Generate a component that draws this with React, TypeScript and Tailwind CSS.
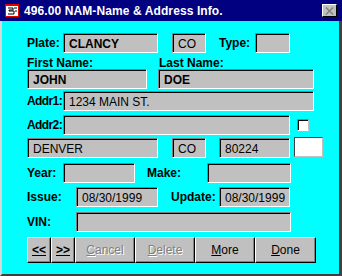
import React from "react";

const font = { fontFamily: '"Liberation Sans", Arial, sans-serif' };

const dither = "bg-[#c0c0c0]";

function Field({ w, children, bold }: { w: string; children?: React.ReactNode; bold?: boolean }) {
  return (
    <div
      className={`${w} h-[20px] shrink-0 ${dither} border border-t-[#808080] border-l-[#808080] border-b-white border-r-white shadow-[inset_1px_1px_0_#000] flex items-center pl-[5px] pt-[2px] text-[12px] leading-none text-black ${bold ? "font-bold" : ""}`}
    >
      {children}
    </div>
  );
}

function Label({ children, w }: { children: React.ReactNode; w?: string }) {
  return (
    <div className={`${w ?? ""} shrink-0 whitespace-nowrap text-[12px] font-bold leading-none text-black`}>
      {children}
    </div>
  );
}

function Btn({ w, children, disabled }: { w: string; children: React.ReactNode; disabled?: boolean }) {
  return (
    <div
      className={`${w} h-[26px] shrink-0 ${dither} border border-t-white border-l-white border-b-black border-r-black shadow-[inset_-1px_-1px_0_#808080] flex items-center justify-center text-[12px] leading-none ${disabled ? "text-[#808080] [text-shadow:1px_1px_0_#fff]" : "text-black"}`}
    >
      {children}
    </div>
  );
}

export default function App() {
  return (
    <div className="w-[342px] h-[276px] bg-[#c0c0c0] flex flex-col overflow-hidden" style={font}>
      {/* title bar */}
      <div className="h-[21px] bg-[#000080] flex items-center pl-[5px] pr-[5px] shrink-0">
        <svg width="14" height="13" viewBox="0 0 14 13" className="shrink-0">
          <rect x="0.5" y="0.5" width="13" height="12" fill="#fff" stroke="#e00000" />
          <rect x="0" y="0" width="14" height="2" fill="#e00000" />
          <path d="M3 4h5v2H4v1h5v3H3" fill="none" stroke="#000" strokeWidth="1" />
          <path d="M9 4h3M10 7h2" stroke="#000" strokeWidth="1" />
        </svg>
        <div className="ml-[5px] text-white font-bold text-[12px] leading-none pt-[1px] whitespace-nowrap tracking-[0.1px]">
          496.00 NAM-Name &amp; Address Info.
        </div>
        <div className={`ml-auto w-[15px] h-[13px] ${dither} border border-t-white border-l-white border-b-black border-r-black flex items-center justify-center`}>
          <svg width="9" height="8" viewBox="0 0 9 8">
            <path d="M1 0.5l7 7M8 0.5l-7 7" stroke="#808080" strokeWidth="1.4" />
          </svg>
        </div>
      </div>

      {/* body */}
      <div className="flex-1 bg-[#00ffff] border-l-2 border-l-[#d8d8d8] border-r-[3px] border-r-[#404040] border-b-2 border-b-[#404040] flex flex-col pl-[25px] pt-[12px]">
        {/* Plate row */}
        <div className="flex items-center h-[20px]">
          <Label w="w-[36px]">Plate:</Label>
          <Field w="w-[95px]" bold>CLANCY</Field>
          <div className="w-[14px]" />
          <Field w="w-[34px]">CO</Field>
          <div className="w-[13px]" />
          <Label w="w-[36px]">Type:</Label>
          <Field w="w-[35px]" />
        </div>
        {/* names labels */}
        <div className="flex items-end h-[16px]">
          <Label w="w-[132px]">First Name:</Label>
          <Label>Last Name:</Label>
        </div>
        <div className="flex items-center h-[20px]">
          <Field w="w-[120px]" bold>JOHN</Field>
          <div className="w-[11px]" />
          <Field w="w-[156px]" bold>DOE</Field>
        </div>
        {/* Addr1 */}
        <div className="flex items-center h-[20px] mt-[2px]">
          <Label w="w-[36px] tracking-[-0.6px]">Addr1:</Label>
          <Field w="w-[251px]">1234 MAIN ST.</Field>
        </div>
        {/* Addr2 */}
        <div className="flex items-center h-[20px] mt-[4px]">
          <Label w="w-[36px] tracking-[-0.6px]">Addr2:</Label>
          <Field w="w-[227px]" />
          <div className="ml-[7px] w-[12px] h-[12px] bg-white border border-t-[#808080] border-l-[#808080] border-b-white border-r-[#c0c0c0] shadow-[inset_1px_1px_0_#000]" />
        </div>
        {/* City row */}
        <div className="flex items-center h-[20px] mt-[3px]">
          <Field w="w-[131px]">DENVER</Field>
          <div className="w-[14px]" />
          <Field w="w-[34px]">CO</Field>
          <div className="w-[13px]" />
          <Field w="w-[71px]">80224</Field>
          <div className="ml-[4px] w-[29px] h-[20px] -mt-[2px] bg-white border border-t-[#404040] border-l-[#404040] border-b-[#c0c0c0] border-r-[#c0c0c0]" />
        </div>
        {/* Year/Make */}
        <div className="flex items-center h-[20px] mt-[5px]">
          <Label w="w-[36px]">Year:</Label>
          <Field w="w-[72px]" />
          <div className="w-[12px]" />
          <Label w="w-[60px]">Make:</Label>
          <Field w="w-[84px]" />
        </div>
        {/* Issue/Update */}
        <div className="flex items-center h-[20px] mt-[4px]">
          <Label w="w-[49px]">Issue:</Label>
          <Field w="w-[82px]">08/30/1999</Field>
          <div className="w-[13px]" />
          <Label w="w-[48px]">Update:</Label>
          <Field w="w-[71px]">08/30/1999</Field>
        </div>
        {/* VIN */}
        <div className="flex items-center h-[20px] mt-[5px]">
          <Label w="w-[49px]">VIN:</Label>
          <Field w="w-[215px]" />
        </div>
        {/* buttons */}
        <div className="flex h-[26px] mt-[5px]">
          <Btn w="w-[24px]"><span className="underline font-bold">&lt;&lt;</span></Btn>
          <Btn w="w-[24px]"><span className="underline font-bold">&gt;&gt;</span></Btn>
          <Btn w="w-[60px]" disabled><span><span className="underline">C</span>ancel</span></Btn>
          <Btn w="w-[60px]" disabled><span><span className="underline">D</span>elete</span></Btn>
          <Btn w="w-[60px]"><span><span className="underline">M</span>ore</span></Btn>
          <Btn w="w-[61px]"><span><span className="underline">D</span>one</span></Btn>
        </div>
      </div>
    </div>
  );
}
